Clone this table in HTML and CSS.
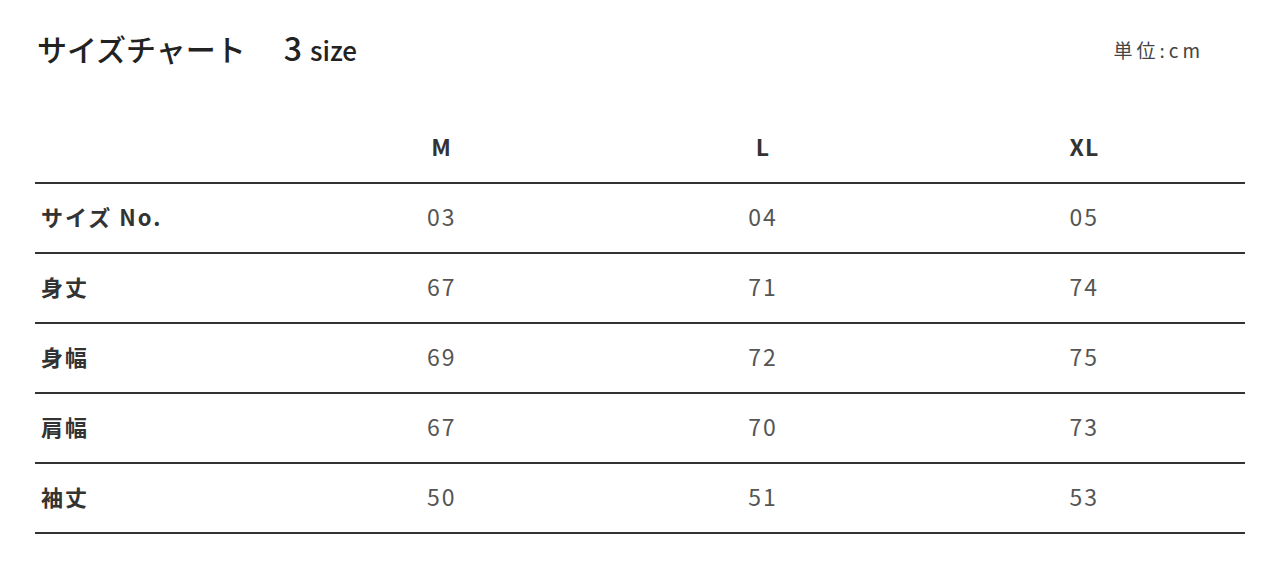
FILE: index.html
```html
<!DOCTYPE html>
<html lang="ja">
<head>
<meta charset="utf-8">
<title>サイズチャート</title>
<link rel="stylesheet" href="styles.css">
</head>
<body>
<div class="page">
  <div class="head">
    <h1 class="title">サイズチャート<span class="count"><span class="num">3</span> size</span></h1>
    <div class="unit">単位:cm</div>
  </div>
  <table class="chart">
    <colgroup>
      <col class="c-label"><col class="c-val"><col class="c-val"><col class="c-val">
    </colgroup>
    <thead>
      <tr><th></th><th>M</th><th>L</th><th>XL</th></tr>
    </thead>
    <tbody>
      <tr><th>サイズ No.</th><td>03</td><td>04</td><td>05</td></tr>
      <tr><th>身丈</th><td>67</td><td>71</td><td>74</td></tr>
      <tr><th>身幅</th><td>69</td><td>72</td><td>75</td></tr>
      <tr><th>肩幅</th><td>67</td><td>70</td><td>73</td></tr>
      <tr><th>袖丈</th><td>50</td><td>51</td><td>53</td></tr>
    </tbody>
  </table>
</div>
</body>
</html>
```

FILE: styles.css
```css
html, body {
  margin: 0;
  padding: 0;
  background: #fff;
}
body {
  font-family: "Noto Sans CJK JP", "Noto Sans", sans-serif;
  color: #333;
}
.page {
  padding: 0 35px;
}
.head {
  display: flex;
  justify-content: space-between;
  align-items: center;
  height: 94px;
  margin-bottom: 20px;
}
.title {
  margin: 0;
  font-size: 30px;
  font-weight: 500;
  letter-spacing: 0;
  color: #222;
  display: flex;
  align-items: baseline;
  padding-left: 2px;
}
.count {
  margin-left: 38px;
  font-size: 26px;
  letter-spacing: 0;
  font-weight: 500;
}
.num {
  font-size: 32px;
  margin-right: 2px;
}
.unit {
  font-size: 19px;
  letter-spacing: 4px;
  color: #444;
  margin-right: 41px;
  margin-top: 4px;
}
.chart {
  width: 100%;
  border-collapse: collapse;
  table-layout: fixed;
}
.c-label { width: 246px; }
.chart th, .chart td {
  height: 64px;
  padding: 0 0 4px;
  border-bottom: 2px solid #333;
}
.chart thead th {
  font-size: 23px;
  font-weight: 700;
  letter-spacing: 1px;
  text-align: center;
  color: #333;
}
.chart tbody th {
  text-align: left;
  padding-left: 6px;
  font-size: 22px;
  font-weight: 700;
  letter-spacing: 2px;
  color: #333;
}
.chart td {
  text-align: center;
  font-size: 23px;
  font-weight: 400;
  letter-spacing: 2px;
  color: #555;
}
```
